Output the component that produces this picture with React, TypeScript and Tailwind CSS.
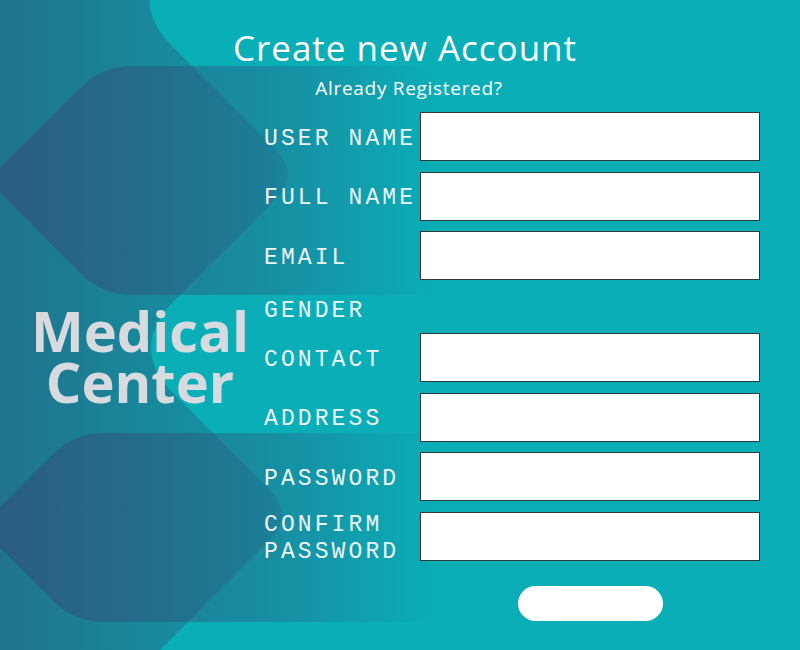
import React from "react";

const fields = [
  { label: ["USER NAME"], input: true },
  { label: ["FULL NAME"], input: true },
  { label: ["EMAIL"], input: true },
  { label: ["GENDER"], input: false },
  { label: ["CONTACT"], input: true },
  { label: ["ADDRESS"], input: true },
  { label: ["PASSWORD"], input: true },
  { label: ["CONFIRM", "PASSWORD"], input: true },
];

function Backdrop() {
  return (
    <svg className="absolute inset-0" width="800" height="650" viewBox="0 0 800 650" aria-hidden>
      <defs>
        <linearGradient id="band" gradientUnits="userSpaceOnUse" x1="0" y1="0" x2="430" y2="0">
          <stop offset="0" stopColor="#20738d" />
          <stop offset="1" stopColor="#0aaeb7" />
        </linearGradient>
        <linearGradient id="hex" gradientUnits="userSpaceOnUse" x1="0" y1="0" x2="440" y2="0">
          <stop offset="0" stopColor="#30507a" stopOpacity="0.62" />
          <stop offset="0.6" stopColor="#30507a" stopOpacity="0.36" />
          <stop offset="1" stopColor="#30507a" stopOpacity="0" />
        </linearGradient>
      </defs>
      <path
        d="M0 -50 L173 -47 Q126 0 173 47 L276 150 Q300 174 276 199 L175 300 Q127 347 175 395 L270 490 Q295 515 270 540 L140 670 L0 670 Z"
        fill="url(#band)"
      />
      <path d="M440 66 L132 66 Q102 66 81 87 L-12 180 L81 274 Q102 295 132 295 L440 295 Z" fill="url(#hex)" />
      <path d="M440 433 L104 433 Q74 433 53 454 L-20 527 L53 601 Q74 622 104 622 L440 622 Z" fill="url(#hex)" />
    </svg>
  );
}

export default function App() {
  return (
    <div className="relative h-[650px] w-[800px] overflow-hidden bg-[#0aaeb7]">
      <Backdrop />
      <div className="relative flex flex-col">
        <h1 className="pl-[10px] pt-[28px] text-center font-['Open_Sans',sans-serif] text-[35px] font-medium leading-[40px] tracking-[1px] text-white">
          Create new Account
        </h1>
        <p className="mt-[7.5px] pl-[18px] text-center font-['Open_Sans',sans-serif] text-[19px] leading-[24px] tracking-[0.7px] text-white">
          Already Registered?
        </p>

        <div className="mt-[12.5px] flex">
          <div className="w-[264px] pl-[16px] pt-[193px] text-center font-['Open_Sans',sans-serif] text-[56px] font-bold text-[#d7dbe0]">
            <div className="h-[51px] leading-[51px]">Medical</div>
            <div className="h-[51px] leading-[51px]">Center</div>
          </div>

          <div className="flex flex-col">
            <div className="grid grid-cols-[156px_340px] gap-y-[10.5px]">
              {fields.map((f) => (
                <React.Fragment key={f.label.join(" ")}>
                  <div
                    className={`flex flex-col justify-center font-['Liberation_Mono',monospace] text-[23px] leading-[27px] tracking-[3.1px] text-[#eef4f5] ${
                      f.input ? "h-[49px] pt-[5px]" : "h-[32px] pt-[9px]"
                    }`}
                  >
                    {f.label.map((l) => (
                      <span key={l} className="whitespace-pre">
                        {l}
                      </span>
                    ))}
                  </div>
                  {f.input ? (
                    <input type="text" className="h-[49px] w-[340px] border border-[#2f3a3d] bg-white outline-none" />
                  ) : (
                    <div />
                  )}
                </React.Fragment>
              ))}
            </div>
            <div className="ml-[156px] mt-[25px] flex w-[340px] justify-center">
              <button className="h-[35px] w-[145px] rounded-full bg-white" />
            </div>
          </div>
        </div>
      </div>
    </div>
  );
}
